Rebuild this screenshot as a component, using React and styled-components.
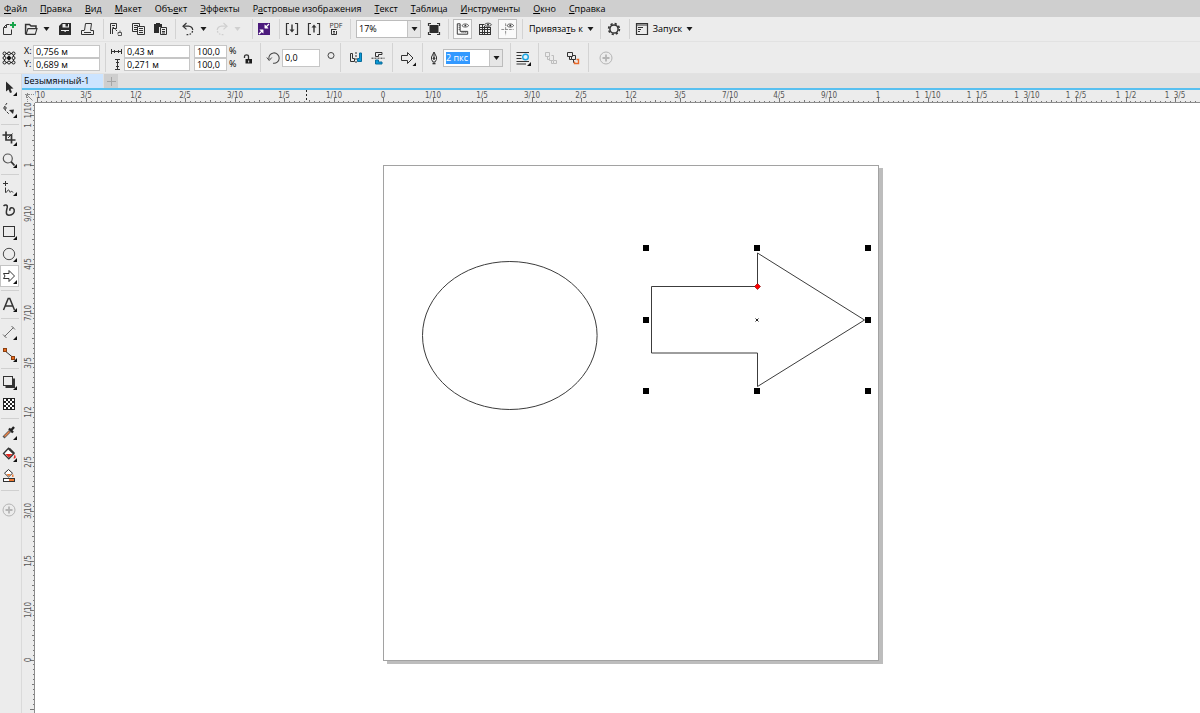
import React, { useEffect, useState } from "react";
import styled, { createGlobalStyle, css } from "styled-components";

const Global = createGlobalStyle`
  *, *::before, *::after { box-sizing: border-box; }
  html, body { margin: 0; padding: 0; }
  body, button, input, select {
    font-family: "Open Sans", "Noto Sans", sans-serif;
    font-size: 9px;
    line-height: 12px;
    color: #000;
  }
  button, input, select { margin: 0; padding: 0; border: 0; border-radius: 0; background: none; outline: none; }
`;

const Window = styled.div`
  display: flex;
  flex-direction: column;
  min-height: 100vh;
  background: #ececec;
`;

const MenuBar = styled.nav`
  display: flex;
  align-items: center;
  gap: 13px;
  height: 17px;
  padding-left: 4px;
  background: #cfcfcf;
`;

const MenuItem = styled.button`
  white-space: nowrap;
  u { text-underline-offset: 1px; }
`;

const Bar = styled.div`
  display: flex;
  align-items: stretch;
  height: ${(p) => p.$height}px;
  padding: ${(p) => p.$inset}px 0;
  background: #ececec;
  border-bottom: 1px solid #e2e2e2;
`;

const Group = styled.div`
  display: flex;
  align-items: center;
  gap: ${(p) => p.$gap || 0}px;
  padding-left: ${(p) => p.$left || 0}px;
  padding-right: ${(p) => p.$right || 0}px;
  border-right: ${(p) => (p.$last ? "0" : "1px solid #d3d3d3")};
`;

const IconButton = styled.button`
  display: flex;
  align-items: center;
  justify-content: center;
  flex: none;
  width: ${(p) => p.$width || 22}px;
  height: 20px;
  ${(p) =>
    p.$pressed &&
    css`
      background: #fafafa;
      border: 1px solid #bdbdbd;
    `}
`;

const CaretButton = styled.button`
  display: flex;
  justify-content: center;
  flex: none;
  width: 9px;
  margin-right: 3px;
`;

const TextButton = styled.button`
  display: flex;
  align-items: center;
  gap: 4px;
  white-space: nowrap;
`;

const ComboBox = styled.div`
  display: flex;
  flex: none;
  align-items: center;
  position: relative;
  width: ${(p) => p.$width}px;
  height: 18px;
  background: #fff;
  border: 1px solid #bcbcbc;
`;

const ComboSelect = styled.select`
  appearance: none;
  width: 100%;
  height: 16px;
  padding-left: 2px;
`;

const ComboArrow = styled.span`
  position: absolute;
  right: 0;
  top: 0;
  display: flex;
  align-items: center;
  justify-content: center;
  width: 13px;
  height: 16px;
  background: #e6e6e6;
  border-left: 1px solid #c4c4c4;
  pointer-events: none;
`;

const SelectedInput = styled.input`
  width: 24px;
  height: 12px;
  margin-left: 2px;
  color: #fff;
  background: #3399ff;
`;

const FieldGrid = styled.div`
  display: grid;
  grid-template-columns: ${(p) => p.$columns};
  grid-auto-rows: 13px;
  align-items: center;
`;

const Field = styled.input`
  width: ${(p) => p.$width || "100%"};
  height: ${(p) => p.$height || 13}px;
  padding-left: 2px;
  background: #fff;
  border: 1px solid #c6c6c6;
`;

const FieldLabel = styled.label`
  display: flex;
  align-items: center;
  justify-content: ${(p) => (p.$center ? "center" : "flex-start")};
`;

const SideIcon = styled.label`
  display: flex;
  justify-content: center;
  width: 16px;
`;

const Body = styled.div`
  display: flex;
  flex: 1;
`;

const ToolBox = styled.aside`
  display: flex;
  flex-direction: column;
  flex: none;
  width: 22px;
  padding-top: 3px;
  border-right: 1px solid #dadada;
`;

const ToolButton = styled.button`
  display: flex;
  align-items: center;
  flex: none;
  width: 19px;
  height: 22px;
  ${(p) =>
    p.$active &&
    css`
      background: #fff;
      box-shadow: inset 0 0 0 1px #c4c4c4;
    `}
`;

const ToolRule = styled.hr`
  width: 18px;
  height: 1px;
  margin: 3px 0 ${(p) => (p.$wide ? 8 : 2)}px 1px;
  border: 0;
  background: #d0d0d0;
`;

const Workspace = styled.main`
  display: flex;
  flex-direction: column;
  flex: 1;
  min-width: 0;
`;

const Tabs = styled.div`
  display: flex;
  height: 16px;
  background: #e1e1e1;
  border-bottom: 2px solid #58c0f0;
`;

const Tab = styled.button`
  width: 81px;
  padding-left: 2px;
  text-align: left;
  background: #cce4ff;
  white-space: nowrap;
`;

const AddTab = styled.button`
  display: flex;
  align-items: center;
  justify-content: center;
  width: 14px;
  margin-left: 1px;
  background: #cecece;
`;

const Desk = styled.div`
  display: grid;
  flex: 1;
  grid-template: 13px 1fr / 13px 1fr;
  min-width: 0;
`;

const RulerSlot = styled.div`
  min-width: 0;
  overflow: hidden;
  border-bottom: ${(p) => (p.$vertical ? "0" : "1px solid #8c8c8c")};
  border-right: ${(p) => (p.$vertical ? "1px solid #8c8c8c" : "0")};
`;

const RulerSvg = styled.svg`
  display: block;
  width: 100%;
  height: 100%;
  overflow: hidden;
  font-family: "DejaVu Sans Condensed", "DejaVu Sans", sans-serif;
  font-size: 8px;
  background: #ececec;
`;

const Canvas = styled.section`
  min-width: 0;
  overflow: hidden;
  padding: 62px 0 48px 348px;
  background: #fff;
`;

const Sheet = styled.div`
  width: 496px;
  border: 1px solid #a2a2a2;
  box-shadow: 4px 3px 0 #bdbdbd;
  background: #fff;
  svg { display: block; overflow: visible; }
`;

/* ---------- icons ---------- */

const INK = "#333";

const Svg = ({ children, size = 18, ...rest }) => (
  <svg width={size} height={size} viewBox={`0 0 ${size} ${size}`} fill="none" stroke={INK} aria-hidden="true" {...rest}>
    {children}
  </svg>
);

const Caret = ({ color = "#1c1c1c" }) => (
  <svg width="7" height="4" viewBox="0 0 7 4" aria-hidden="true">
    <path d="M.5 0H6.5L3.5 4Z" fill={color} />
  </svg>
);

const corner = <path d="M17 13V17H13Z" fill="#111" stroke="none" />;

const icons = {
  create: (
    <Svg>
      <path d="M8.5 4.5H5.5L2.5 7.5V14.5H10.5V9.5M5.5 5V7.5H3" />
      <path d="M12 2V8M9 5H15" stroke="#17a34a" strokeWidth="2" />
    </Svg>
  ),
  open: (
    <Svg>
      <path d="M3.6 14V4.5H7.5L9 6H14V8.5" strokeWidth="1.5" />
      <path d="M4 14.4L6 8.6H15L13.2 14.4Z" strokeWidth="1.1" />
    </Svg>
  ),
  save: (
    <Svg stroke="none">
      <path d="M3 6L6 3H15V15H3Z" fill="#2b2b2b" />
      <path d="M6.5 4H13V7.5H6.5Z" fill="#ececec" />
      <path d="M9.5 3.5H12V6.5H9.5Z" fill="#2b2b2b" />
      <path d="M5 10H13V11H5Z" fill="#ececec" />
      <path d="M8.5 10.5H9.8V12H8.5Z" fill="#ececec" />
    </Svg>
  ),
  print: (
    <Svg>
      <path d="M6.5 10.5L7.5 3.5H13.5L12.5 10.5M6 10.5H3.5V14.5H15.5V10.5H13M6 12.5H13" />
    </Svg>
  ),
  cut: (
    <Svg>
      <path d="M3.5 14V3.5H9.5V8.5H5.5V14M5 5.5H8M5.5 7.5H7" />
      <path d="M8.5 9.5L10 11" />
      <path d="M11 14.5V12.5H14.5V15.5H11M13 10.5V12.5" stroke="#555" />
    </Svg>
  ),
  copy: (
    <Svg>
      <path d="M10.5 6V3.5H3.5V11.5H8M5 5.5H9M5 7.5H8M5 9.5H8" />
      <path d="M8.5 6.5H15.5V14.5H8.5ZM10 8.5H14M10 10.5H14M10 12.5H14" />
    </Svg>
  ),
  paste: (
    <Svg>
      <path d="M3 4H5V3H9V4H11V7H8V13H3Z" fill="#2b2b2b" stroke="none" />
      <path d="M9.5 7.5H15.5V14.5H9.5ZM11 9.5H14M11 11.5H14M11 13H14" />
    </Svg>
  ),
  undo: (
    <Svg>
      <path d="M4.5 6.2H9.5C12 6.4 13.5 8 13.8 10" strokeWidth="1.2" />
      <path d="M13.6 11C12.8 13.8 10.5 15 7.5 14.6" strokeDasharray="1.6 1.4" strokeWidth="1.2" />
      <path d="M7.5 3L4 6.2L7.5 9.4" strokeWidth="1.2" />
    </Svg>
  ),
  redo: (
    <Svg stroke="#cfcfcf">
      <path d="M13.5 6.2H8.5C6 6.4 4.5 8 4.2 10" strokeWidth="1.2" />
      <path d="M4.4 11C5.2 13.8 7.5 15 10.5 14.6" strokeDasharray="1.6 1.4" strokeWidth="1.2" />
      <path d="M10.5 3L14 6.2L10.5 9.4" strokeWidth="1.2" />
    </Svg>
  ),
  launcher: (
    <Svg stroke="#fff">
      <rect x="3" y="3" width="12" height="12" fill="#4b1a7c" stroke="none" />
      <path d="M14 4L10.5 7.5M4 14L7.5 10.5" strokeWidth="1.3" />
      <path d="M9.8 4.8V8.2H13.2ZM8.2 13.2V9.8H4.8Z" fill="#fff" strokeWidth=".5" />
    </Svg>
  ),
  importFile: (
    <Svg>
      <path d="M6 3.5H3.5V14.5H6M12 3.5H14.5V14.5H12" strokeWidth="1.2" />
      <path d="M9 4.5V11" strokeWidth="1.4" />
      <path d="M6.5 9.5H11.5L9 12.5Z" fill={INK} stroke="none" />
    </Svg>
  ),
  exportFile: (
    <Svg>
      <path d="M6 3.5H3.5V14.5H6M12 3.5H14.5V14.5H12" strokeWidth="1.2" />
      <path d="M9 12.5V6" strokeWidth="1.4" />
      <path d="M6.5 7.5H11.5L9 4.5Z" fill={INK} stroke="none" />
    </Svg>
  ),
  pdf: (
    <Svg>
      <text x="9" y="8" fontSize="7" textAnchor="middle" fill={INK} stroke="none">PDF</text>
      <path d="M4 9.5H9.5M4.5 9.5V14.5H9.5V11M6 11.5H8M6 13H8" />
    </Svg>
  ),
  fullscreen: (
    <Svg>
      <path d="M3.5 6V3.5H6M12 3.5H14.5V6M14.5 12V14.5H12M6 14.5H3.5V12" strokeWidth="1.2" />
      <rect x="4.5" y="5" width="9" height="8" fill="#2b2b2b" stroke="none" />
    </Svg>
  ),
  rulers: (
    <Svg>
      <path d="M3.5 3.5H6.5V11.5H14.5V14.5H3.5Z" />
      <path d="M5 5.5H6M5 7.5H6M5 9.5H6M8.5 12V13M10.5 12V13M12.5 12V13" />
      <path d="M8.5 5.5C9.5 3 14.5 3 15.5 5.5C14.5 7.5 9.5 7.5 8.5 5.5Z" strokeWidth=".8" />
      <circle cx="12" cy="5.3" r="1" fill={INK} stroke="none" />
    </Svg>
  ),
  grid: (
    <Svg>
      <path d="M3 4.5H8M3 7.5H15M3 9.5H15M3 12.5H15M3 14.5H15M3.5 4V15M6.5 4V15M8.5 6V15M11.5 7V15M14.5 7V15" />
      <path d="M8.5 4.8C9.5 2.6 14.5 2.6 15.5 4.8C14.5 6.8 9.5 6.8 8.5 4.8Z" strokeWidth=".8" />
      <circle cx="12" cy="4.7" r="1" fill={INK} stroke="none" />
    </Svg>
  ),
  guides: (
    <Svg>
      <path d="M2.5 9.5H15.5M7 3V15.5" stroke="#8a8a8a" strokeDasharray="3 1" />
      <path d="M8.5 5.5C9.5 3 14.5 3 15.5 5.5C14.5 7.5 9.5 7.5 8.5 5.5Z" strokeWidth=".8" />
      <circle cx="12" cy="5.3" r="1" fill={INK} stroke="none" />
    </Svg>
  ),
  gear: (
    <Svg>
      <circle cx="9" cy="9" r="4.1" strokeWidth="1.5" />
      <circle cx="9" cy="9" r="5.4" strokeWidth="1.6" strokeDasharray="2.2 2.04" />
    </Svg>
  ),
  panel: (
    <Svg>
      <path d="M3.5 3.5H14.5V14.5H3.5ZM3 5H15" strokeWidth="1.2" />
      <path d="M5 7.5H10M5 9.5H8M5 11.5H7" />
    </Svg>
  ),
  origin: (
    <Svg stroke="#1c1c1c">
      <path d="M4.5 4.5H13.5V13.5H4.5Z" />
      <g fill="#ececec">
        <circle cx="4.5" cy="4.5" r="1.5" /><circle cx="9" cy="4.5" r="1.5" /><circle cx="13.5" cy="4.5" r="1.5" />
        <circle cx="4.5" cy="9" r="1.5" /><circle cx="13.5" cy="9" r="1.5" />
        <circle cx="4.5" cy="13.5" r="1.5" /><circle cx="9" cy="13.5" r="1.5" /><circle cx="13.5" cy="13.5" r="1.5" />
      </g>
      <circle cx="9" cy="9" r="1.6" fill="#111" />
    </Svg>
  ),
  lock: (
    <Svg>
      <path d="M5.5 9V7.5C5.5 5.3 9.5 5.3 9.5 7.5V11" strokeWidth="1.3" />
      <path d="M6.5 10H13V14.5H6.5Z" fill="#1c1c1c" stroke="none" />
      <path d="M9.7 11.5V13.5" stroke="#ececec" />
    </Svg>
  ),
  rotate: (
    <Svg size={16} stroke="#4a4a4a">
      <path d="M3 9.5A5.2 5.2 0 1 1 7 13.2" strokeWidth="1.1" />
      <path d="M.8 7.5L3.2 10.5L5.8 7.5" />
    </Svg>
  ),
  degree: (
    <Svg><circle cx="10" cy="6.5" r="3" stroke="#444" /></Svg>
  ),
  mirrorH: (
    <Svg>
      <path d="M3.5 4.5V12.5H7.5V9.5H5.5V4.5Z" />
      <path d="M9 3V15" strokeDasharray="2 1" />
      <path d="M14.5 4V12.5H10.5V9.5H12.5V4Z" fill="#0a9ad8" stroke="#0b6c9a" />
    </Svg>
  ),
  mirrorV: (
    <Svg>
      <path d="M13 3.5H6.5V7.5H9.5V5.5H13Z" />
      <path d="M2.5 9.2H15.5" strokeDasharray="2 1" />
      <path d="M13 15H6.5V11H9.5V13H13Z" fill="#0a9ad8" stroke="#0b6c9a" />
    </Svg>
  ),
  shapes: (
    <Svg>
      <path d="M3.5 6.5H9.5V3.5L15 9L9.5 14.5V11.5H3.5Z" />
      <path d="M18 13.5V17H14.5Z" fill="#111" stroke="none" />
    </Svg>
  ),
  pen: (
    <Svg size={16}>
      <path d="M8 2L5.5 7V9.5L7 12H9L10.5 9.5V7ZM8 2.5V8" />
      <circle cx="8" cy="8.5" r=".9" fill={INK} />
      <path d="M6.5 13.5H9.5" strokeWidth="1.6" />
    </Svg>
  ),
  wrap: (
    <Svg>
      <path d="M2.5 3.5H15M2.5 6.5H7.5M2.5 9.5H7.5M2.5 12.5H15M2.5 15H12" strokeWidth="1.2" />
      <circle cx="11.5" cy="8" r="2.8" stroke="#1ba4e0" strokeWidth="1.4" fill="#dff3fc" />
      {corner}
    </Svg>
  ),
  chainOff: (
    <Svg stroke="#bdbdbd">
      <path d="M3.5 3.5H7.5V7.5H3.5ZM5.5 8V10.5H7.5M9.5 6.5H11.5V11.5H7.5V8.5M9.5 12V14.5H11.5M12 11.5H14.5V14.5H11.5V12" />
    </Svg>
  ),
  chainOn: (
    <Svg>
      <path d="M3.5 3.5H8.5V7.5H3.5ZM5.5 8V10.5H7.5M9 6.5H11.5V10.5H7.5V8" />
      <path d="M9.5 11V13.5H11" />
      <path d="M12.5 10.5H14.5V14.5H10.5V12.5" stroke="#e8692a" strokeWidth="1.4" />
    </Svg>
  ),
  plus: (
    <Svg stroke="#b5b5b5">
      <circle cx="9" cy="9" r="6" />
      <path d="M9 5.5V12.5M5.5 9H12.5" strokeWidth="1.8" />
    </Svg>
  ),
  pick: (
    <Svg>
      <path d="M6 2.5V12.5L8.5 10.5L10 14L12 13.2L10.5 9.8L13.5 9.5Z" fill="#2b2b2b" stroke="none" />
      {corner}
    </Svg>
  ),
  node: (
    <Svg>
      <path d="M7 2L4.5 5.5L5.5 9.5L9 13" strokeDasharray="2.5 1" />
      <circle cx="5" cy="7" r="1.2" fill="#ececec" />
      <path d="M9 9L14 8.5L13 13Z" fill="#2b2b2b" stroke="none" />
      {corner}
    </Svg>
  ),
  crop: (
    <Svg>
      <path d="M6 2.5V11H15.5M2.5 6H11.5V14.5" strokeWidth="1.7" />
      <path d="M12.5 4.5L8 9" />
      {corner}
    </Svg>
  ),
  zoom: (
    <Svg>
      <circle cx="7.8" cy="7.5" r="4.5" stroke="#555" strokeWidth="1.2" />
      <path d="M11 10.7L14.5 14.5" strokeWidth="1.8" />
      {corner}
    </Svg>
  ),
  freehand: (
    <Svg>
      <path d="M5.5 2V7M3 4.5H8" />
      <path d="M5.5 8.5V13.5C7 14 7 11 8.5 11S9 14 10.5 13S12 12 13 13.5" />
      {corner}
    </Svg>
  ),
  artistic: (
    <Svg>
      <path d="M3.5 5C5 3.5 7.8 3.5 7.2 6.5C6.5 9.5 5 14.2 9 14.2C12.8 14.2 14.8 11.5 14.2 8.8C13.5 6 9.5 6 9.8 9.8" strokeWidth="1.5" />
    </Svg>
  ),
  rect: <Svg><rect x="3.5" y="3.5" width="11" height="10" />{corner}</Svg>,
  oval: <Svg><circle cx="9" cy="9" r="5.7" stroke="#4a4a4a" />{corner}</Svg>,
  arrowShape: (
    <Svg>
      <path d="M3.5 6.5H9V3.5L14.5 9L9 14.5V11.5H3.5L5 9Z" />
      {corner}
    </Svg>
  ),
  text: (
    <Svg>
      <path d="M3.5 15L8.2 3.5H9.8L14.5 15M5.2 11H12.8" strokeWidth="1.5" />
      {corner}
    </Svg>
  ),
  line: (
    <Svg stroke="#6a6a6a">
      <path d="M4.5 13.5L13.5 4.5M3 11.5L6.5 15M11.5 3L15 6.5" />
      {corner}
    </Svg>
  ),
  connector: (
    <Svg>
      <path d="M4.5 5.5L13 12.5" />
      <rect x="3.5" y="3.5" width="3" height="3" fill="#e8691c" stroke="#8a3f10" />
      <rect x="11.5" y="11.5" width="3" height="3" fill="#e8691c" stroke="#8a3f10" />
      {corner}
    </Svg>
  ),
  dropShadow: (
    <Svg>
      <path d="M5.5 14H14V5.5" strokeWidth="2" />
      <rect x="3.5" y="3.5" width="9" height="9" fill="#ececec" />
      {corner}
    </Svg>
  ),
  checker: (
    <Svg stroke="none">
      <rect x="3" y="3" width="12" height="12" fill="#222" />
      <g fill="#fff">
        {[0, 1, 2, 3, 4].map((r) =>
          [0, 1, 2, 3, 4].map((c) =>
            (r + c) % 2 ? null : <rect key={`${r}-${c}`} x={4 + c * 2} y={4 + r * 2} width="2" height="2" />
          )
        )}
      </g>
    </Svg>
  ),
  dropper: (
    <Svg>
      <path d="M3.5 14.5L10 8" stroke="#555" strokeWidth="2.8" />
      <path d="M4.5 13.5L9.5 8.5" stroke="#ef8347" strokeWidth="1.4" />
      <path d="M9 5.5L13 9.5M11 7.5L14 4" strokeWidth="2.4" stroke="#222" />
      {corner}
    </Svg>
  ),
  fill: (
    <Svg>
      <path d="M8.5 3.2L14 8.5L8.8 13.8L3.5 8.5Z" fill="#fff" strokeWidth="1.3" />
      <path d="M5.5 9H12.5L8.8 12.4Z" fill="#e52620" stroke="none" />
      <path d="M9 3.6L14 8.5" strokeWidth="2.4" />
      <path d="M14.6 9.5C16.6 12 15.5 14 13.5 13.5Z" fill="#e52620" stroke="none" />
      {corner}
    </Svg>
  ),
  smartFill: (
    <Svg>
      <path d="M8.5 2.5L12.5 6.2L8.5 10L4.5 6.2Z" fill="#fff" />
      <path d="M6.5 7H10.8L8.5 9.2Z" fill="#f07a31" stroke="none" />
      <path d="M12.8 7.5V10" stroke="#f07a31" strokeWidth="1.4" />
      <rect x="3.5" y="11.5" width="11" height="3" fill="#fff" />
      <rect x="9" y="12" width="5" height="2" fill="#f07a31" stroke="none" />
    </Svg>
  ),
  width: (
    <svg width="11" height="7" viewBox="0 0 11 7" fill="none" stroke={INK} aria-hidden="true">
      <path d="M.5 1V6M10.5 1V6M1 3.5H10M3.5 2V5M7.5 2V5" />
    </svg>
  ),
  height: (
    <svg width="7" height="11" viewBox="0 0 7 11" fill="none" stroke={INK} aria-hidden="true">
      <path d="M1 .5H6M1 10.5H6M3.5 1V10M2 3.5H5M2 7.5H5" />
    </svg>
  ),
};

/* ---------- data ---------- */

const menus = [
  ["", "Ф", "айл"], ["", "П", "равка"], ["", "В", "ид"], ["", "М", "акет"],
  ["Объ", "е", "кт"], ["", "Э", "ффекты"], ["Р", "а", "стровые изображения"],
  ["", "Т", "екст"], ["", "Т", "аблица"], ["", "И", "нструменты"], ["", "О", "кно"], ["", "С", "правка"],
];

const toolGroups = [
  [["pick", "Указатель"], ["node", "Форма"]],
  [["crop", "Обрезка"], ["zoom", "Масштаб"]],
  [["freehand", "Свободная форма"], ["artistic", "Кисть"], ["rect", "Прямоугольник"], ["oval", "Эллипс"], ["arrowShape", "Основные фигуры"]],
  [["text", "Текст"]],
  [["line", "Размерная линия"], ["connector", "Соединитель"]],
  [["dropShadow", "Тень"], ["checker", "Прозрачность"]],
  [["dropper", "Пипетка"], ["fill", "Заливка"], ["smartFill", "Интеллектуальная заливка"]],
  [["plus", "Добавить"]],
];

const FRACTIONS = ["", "1/10", "1/5", "3/10", "2/5", "1/2", "3/5", "7/10", "4/5", "9/10"];
const STEP = 49.5;
const LABEL_ROOM = 14;

const labelFor = (n) => {
  const k = Math.abs(n);
  const whole = Math.floor(k / 10);
  const part = FRACTIONS[k % 10];
  if (!part) return String(whole);
  return whole ? `${whole}\u00a0\u00a0${part}` : part;
};

function useViewport() {
  const read = () => ({ width: window.innerWidth, height: window.innerHeight });
  const [size, setSize] = useState(read);
  useEffect(() => {
    const update = () => setSize(read());
    window.addEventListener("resize", update);
    return () => window.removeEventListener("resize", update);
  }, []);
  return size;
}

/* A ruler of the given length; labels start at `first` and stop where they no longer fit. */
function Ruler({ zero, length, first, vertical }) {
  const sign = vertical ? -1 : 1;
  const marks = [];
  const labels = [];
  const low = Math.floor(((vertical ? zero - length : -zero) * 10) / STEP);
  const high = Math.ceil(((vertical ? zero : length - zero) * 10) / STEP);
  for (let i = low; i <= high; i += 1) {
    const pos = Math.floor(zero + (sign * i * STEP) / 10) + 0.5;
    const start = i % 10 === 0 ? 8 : i % 5 === 0 ? 10 : 11;
    marks.push(vertical ? `M${start} ${pos}H12` : `M${pos} ${start}V12`);
    const n = i / 10;
    if (!Number.isInteger(n) || n < first || pos > length - LABEL_ROOM) continue;
    const at = Math.floor(pos);
    labels.push(
      <text
        key={n}
        textAnchor="middle"
        fill="#555"
        {...(vertical ? { transform: `translate(9 ${at}) rotate(-90)` } : { x: at, y: 8 })}
      >
        {labelFor(n)}
      </text>
    );
  }
  return (
    <RulerSlot $vertical={vertical}>
      <RulerSvg aria-hidden="true">
        <path d={marks.join("")} stroke="#777" fill="none" />
        {labels}
        {!vertical && <path d="M271.5 0V12" stroke="#222" strokeDasharray="2 2" />}
      </RulerSvg>
    </RulerSlot>
  );
}

function Drawing() {
  const xs = [643, 754, 865];
  const ys = [245, 317, 388];
  return (
    <svg width="494" height="494" viewBox="384 166 494 494" fill="none" stroke="#3c3c3c" role="img" aria-label="Эллипс и стрелка">
      <ellipse cx="509.8" cy="335.5" rx="87.3" ry="74" />
      <path d="M651.5 286.5H757.5V253L864.5 320L757.5 386.5V353H651.5Z" />
      <path d="M755.5 318.5L758.5 321.5M758.5 318.5L755.5 321.5" stroke="#222" />
      {ys.map((y) =>
        xs.map((x) =>
          x === 754 && y === 317 ? null : <rect key={`${x}-${y}`} x={x} y={y} width="6" height="6" fill="#000" stroke="none" />
        )
      )}
      <path d="M757.5 283.5L760.5 286.5L757.5 289.5L754.5 286.5Z" fill="#f00" stroke="#7a0000" strokeWidth=".6" />
    </svg>
  );
}

const Tool = ({ icon, label, width, pressed, disabled }) => (
  <IconButton type="button" aria-label={label} $width={width} $pressed={pressed} disabled={disabled}>
    {icons[icon]}
  </IconButton>
);

export default function App() {
  const viewport = useViewport();
  return (
    <Window>
      <Global />
      <MenuBar>
        {menus.map(([a, b, c]) => (
          <MenuItem type="button" key={a + b + c}>{a}<u>{b}</u>{c}</MenuItem>
        ))}
      </MenuBar>

      <Bar $height={25} $inset={2}>
        <Group $right={5}>
          <Tool icon="create" label="Создать" width={20} />
          <Tool icon="open" label="Открыть" />
          <CaretButton type="button" aria-label="Недавние файлы"><Caret /></CaretButton>
          <Tool icon="save" label="Сохранить" />
          <Tool icon="print" label="Печать" />
        </Group>
        <Group $left={1} $right={4}>
          <Tool icon="cut" label="Вырезать" />
          <Tool icon="copy" label="Копировать" />
          <Tool icon="paste" label="Вставить" />
        </Group>
        <Group $left={1} $right={7}>
          <Tool icon="undo" label="Отменить" />
          <CaretButton type="button" aria-label="Список отмены"><Caret /></CaretButton>
          <Tool icon="redo" label="Повторить" disabled />
          <CaretButton type="button" aria-label="Список повтора" disabled><Caret color="#cfcfcf" /></CaretButton>
        </Group>
        <Group $right={4}>
          <Tool icon="launcher" label="Поиск содержимого" />
        </Group>
        <Group $left={1} $right={3}>
          <Tool icon="importFile" label="Импорт" />
          <Tool icon="exportFile" label="Экспорт" />
          <Tool icon="pdf" label="Опубликовать в PDF" />
        </Group>
        <Group $left={5} $right={3} $gap={2}>
          <ComboBox $width={65}>
            <ComboSelect aria-label="Масштаб" defaultValue="17%">
              <option>17%</option>
              <option>50%</option>
              <option>100%</option>
            </ComboSelect>
            <ComboArrow><Caret /></ComboArrow>
          </ComboBox>
          <Tool icon="fullscreen" label="Во весь экран" />
        </Group>
        <Group $left={4} $right={5} $gap={2}>
          <Tool icon="rulers" label="Линейки" width={19} pressed />
          <Tool icon="grid" label="Сетка" />
          <Tool icon="guides" label="Направляющие" width={19} pressed />
        </Group>
        <Group $left={6} $right={6}>
          <TextButton type="button"><span>Привяза<u>т</u>ь к</span><Caret /></TextButton>
        </Group>
        <Group $left={2} $right={4}>
          <Tool icon="gear" label="Параметры" />
        </Group>
        <Group $left={1} $last>
          <Tool icon="panel" label="Панель запуска" />
          <TextButton type="button"><span>Запуск</span><Caret /></TextButton>
        </Group>
      </Bar>

      <Bar $height={32} $inset={1}>
        <Group $right={5} $gap={6}>
          <Tool icon="origin" label="Исходная точка" width={18} />
          <FieldGrid $columns="9px 67px">
            <FieldLabel htmlFor="pos-x">X:</FieldLabel>
            <Field id="pos-x" defaultValue="0,756 м" />
            <FieldLabel htmlFor="pos-y">Y:</FieldLabel>
            <Field id="pos-y" defaultValue="0,689 м" />
          </FieldGrid>
        </Group>
        <Group $left={5} $right={3}>
          <FieldGrid $columns="13px 66px 4px 33px 2px 10px">
            <FieldLabel htmlFor="size-w" aria-label="Ширина">{icons.width}</FieldLabel>
            <Field id="size-w" defaultValue="0,43 м" />
            <span />
            <Field id="scale-x" defaultValue="100,0" />
            <span />
            <FieldLabel htmlFor="scale-x">%</FieldLabel>
            <FieldLabel htmlFor="size-h" aria-label="Высота" $center>{icons.height}</FieldLabel>
            <Field id="size-h" defaultValue="0,271 м" />
            <span />
            <Field id="scale-y" defaultValue="100,0" />
            <span />
            <FieldLabel htmlFor="scale-y">%</FieldLabel>
          </FieldGrid>
          <Tool icon="lock" label="Сохранять пропорции" width={18} />
        </Group>
        <Group $left={5}>
          <SideIcon htmlFor="angle" aria-label="Угол поворота">{icons.rotate}</SideIcon>
          <Field id="angle" defaultValue="0,0" $width="38px" $height={18} />
          <Tool icon="degree" label="Градусы" width={20} />
        </Group>
        <Group $left={4} $right={3}>
          <Tool icon="mirrorH" label="Отразить по горизонтали" />
          <Tool icon="mirrorV" label="Отразить по вертикали" />
        </Group>
        <Group $left={3} $right={4}>
          <Tool icon="shapes" label="Фигуры" />
        </Group>
        <Group $left={3} $right={7} $gap={1}>
          <SideIcon htmlFor="outline" aria-label="Толщина абриса">{icons.pen}</SideIcon>
          <ComboBox $width={60}>
            <SelectedInput id="outline" defaultValue="2 пкс" />
            <ComboArrow><Caret /></ComboArrow>
          </ComboBox>
        </Group>
        <Group $left={1} $right={4}>
          <Tool icon="wrap" label="Обтекание текстом" />
        </Group>
        <Group $left={1} $right={4}>
          <Tool icon="chainOff" label="На передний план" disabled />
          <Tool icon="chainOn" label="На задний план" />
        </Group>
        <Group $left={6} $last>
          <Tool icon="plus" label="Быстрая настройка" />
        </Group>
      </Bar>

      <Body>
        <ToolBox>
          {toolGroups.map((group, i) => (
            <React.Fragment key={group[0][0]}>
              {i > 0 && <ToolRule $wide={i === toolGroups.length - 1} />}
              {group.map(([icon, label]) => (
                <ToolButton type="button" key={icon} aria-label={label} $active={icon === "arrowShape"}>
                  {icons[icon]}
                </ToolButton>
              ))}
            </React.Fragment>
          ))}
        </ToolBox>
        <Workspace>
          <Tabs>
            <Tab type="button">Безымянный-1</Tab>
            <AddTab type="button" aria-label="Новая вкладка">
              <svg width="9" height="9" viewBox="0 0 9 9" stroke="#a5a5a5" aria-hidden="true"><path d="M4.5 0V9M0 4.5H9" /></svg>
            </AddTab>
          </Tabs>
          <Desk>
            <svg width="13" height="13" viewBox="0 0 13 13" fill="none" stroke="#8a8a8a" aria-hidden="true">
              <path d="M5.5 3V12M3 4.5H12" strokeDasharray="1 1" />
              <path d="M4.5 8V4.5H8M5 5L10.5 10.5" />
            </svg>
            <Ruler zero={348.5} length={viewport.width - 35} first={-7} />
            <Ruler zero={557} length={viewport.height - 103} first={0} vertical />
            <Canvas>
              <Sheet><Drawing /></Sheet>
            </Canvas>
          </Desk>
        </Workspace>
      </Body>
    </Window>
  );
}
